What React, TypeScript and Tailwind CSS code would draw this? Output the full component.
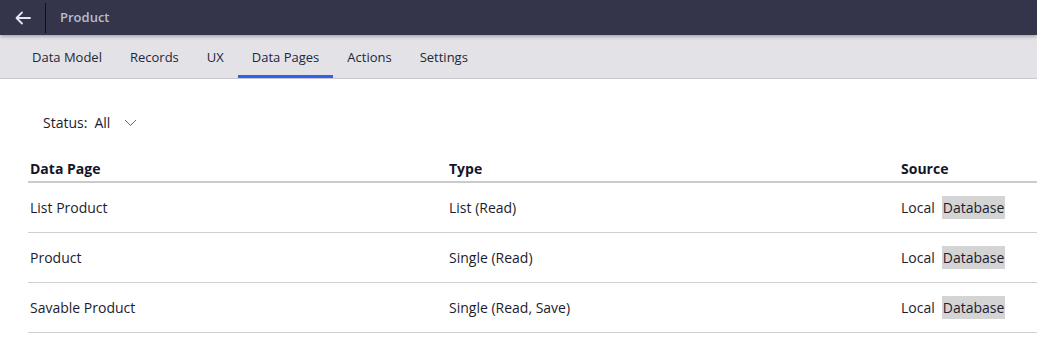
import React from "react";

const font = { fontFamily: '"Open Sans", "Noto Sans", sans-serif' };

const rows = [
  { name: "List Product", type: "List (Read)" },
  { name: "Product", type: "Single (Read)" },
  { name: "Savable Product", type: "Single (Read, Save)" },
];

const tabs = ["Data Model", "Records", "UX", "Data Pages", "Actions", "Settings"];

export default function App() {
  return (
    <div className="w-[1037px] h-[340px] bg-white overflow-hidden text-[#1c1c2e]" style={font}>
      <div className="relative z-10 h-[35px] bg-[#34354a] flex items-center shadow-[0_1px_4px_rgba(0,0,0,0.35)]">
        <div className="w-[45px] h-full flex items-center justify-center">
          <svg width="16" height="14" viewBox="0 0 16 14" fill="none" stroke="#e6e6ee" strokeWidth="1.8" strokeLinecap="round" strokeLinejoin="round">
            <path d="M15 7H2M7 1.5L1.5 7L7 12.5" />
          </svg>
        </div>
        <div className="w-px h-[30px] bg-[#0e0e16]" />
        <div className="pl-[14px] text-[13px] font-semibold text-[#b9bccd]">Product</div>
      </div>
      <div className="h-[44px] bg-[#e2e2e7] border-b border-[#c8c8ce] flex items-stretch pl-[18px]">
        {tabs.map((t) => (
          <div
            key={t}
            className={
              "px-[14px] flex items-center text-[13px] text-[#262637] border-b-[3px] " +
              (t === "Data Pages" ? "border-[#3060ec]" : "border-transparent")
            }
          >
            <span className="mt-[6px]">{t}</span>
          </div>
        ))}
      </div>
      <div className="pl-[28px]">
        <div className="pt-[33px] h-[80px]">
          <div className="h-[20px] flex items-center pl-[15px] text-[14px] text-[#1c1c2e]">
            <span>Status:</span>
            <span className="ml-[7px]">All</span>
            <svg className="ml-[14px] mt-[1px]" width="13" height="8" viewBox="0 0 13 8" fill="none" stroke="#6a6a7c" strokeWidth="1">
              <path d="M1 1L6.5 6.5L12 1" />
            </svg>
          </div>
        </div>
        <div className="grid grid-cols-[421px_452px_1fr] h-[24px] border-b-2 border-[#cbcbcb] text-[14px] font-bold items-center text-[#151528]">
          <div className="pl-[2px] -mt-[3px]">Data Page</div>
          <div className="-mt-[3px]">Type</div>
          <div className="-mt-[3px]">Source</div>
        </div>
        {rows.map((r) => (
          <div key={r.name} className="grid grid-cols-[421px_452px_1fr] h-[50px] border-b border-[#d0d0d4] text-[14px] items-center">
            <div className="pl-[2px]">{r.name}</div>
            <div>{r.type}</div>
            <div className="flex items-center">
              <span>Local</span>
              <span className="ml-[7px] bg-[#d4d4d4] px-[1px] leading-[23px]">Database</span>
            </div>
          </div>
        ))}
      </div>
    </div>
  );
}
